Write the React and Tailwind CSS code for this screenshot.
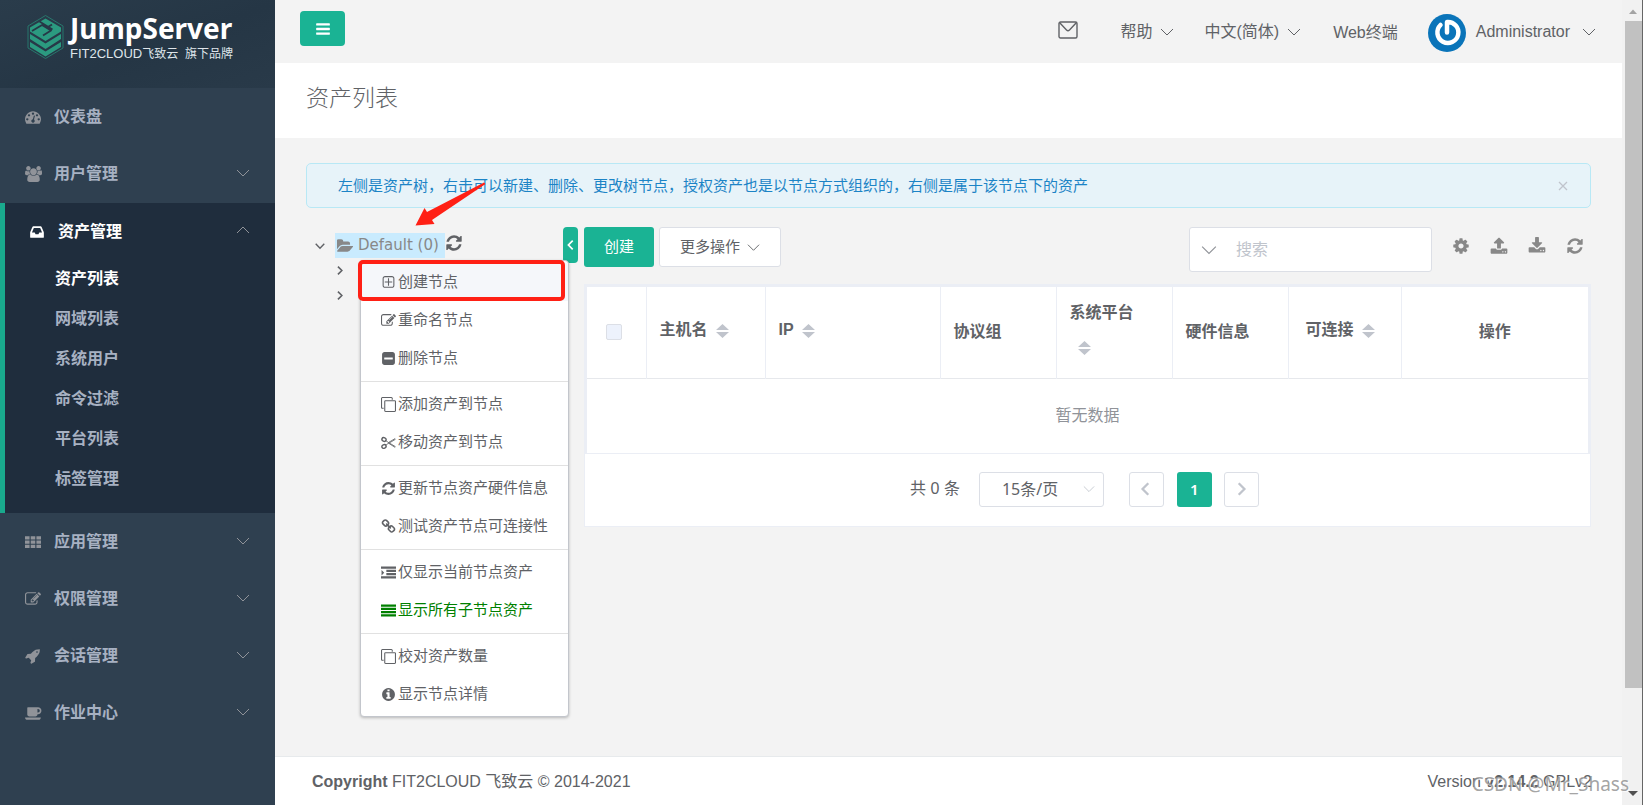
import { useState } from 'react';

// Glyph outlines, one em = 1792 units
const glyphs = {
  bars: { d: 'M1664 1344v128q0 26-19 45t-45 19h-1408q-26 0-45-19t-19-45v-128q0-26 19-45t45-19h1408q26 0 45 19t19 45zm0-512v128q0 26-19 45t-45 19h-1408q-26 0-45-19t-19-45v-128q0-26 19-45t45-19h1408q26 0 45 19t19 45zm0-512v128q0 26-19 45t-45 19h-1408q-26 0-45-19t-19-45v-128q0-26 19-45t45-19h1408q26 0 45 19t19 45z' },
  dashboard: { d: 'M384 1152q0-53-37.5-90.5t-90.5-37.5-90.5 37.5-37.5 90.5 37.5 90.5 90.5 37.5 90.5-37.5 37.5-90.5zm192-448q0-53-37.5-90.5t-90.5-37.5-90.5 37.5-37.5 90.5 37.5 90.5 90.5 37.5 90.5-37.5 37.5-90.5zm428 481l101-382q6-26-7.5-48.5t-38.5-29.5-48 6.5-30 39.5l-101 382q-60 5-107 43.5t-63 98.5q-20 77 20 146t117 89 146-20 89-117q16-60-6-117t-72-91zm660-33q0-53-37.5-90.5t-90.5-37.5-90.5 37.5-37.5 90.5 37.5 90.5 90.5 37.5 90.5-37.5 37.5-90.5zm-640-640q0-53-37.5-90.5t-90.5-37.5-90.5 37.5-37.5 90.5 37.5 90.5 90.5 37.5 90.5-37.5 37.5-90.5zm448 192q0-53-37.5-90.5t-90.5-37.5-90.5 37.5-37.5 90.5 37.5 90.5 90.5 37.5 90.5-37.5 37.5-90.5zm320 448q0 261-141 483-19 29-54 29h-1402q-35 0-54-29-141-221-141-483 0-182 71-348t191-286 286-191 348-71 348 71 286 191 191 286 71 348z' },
  users: { w: 1920, d: 'M593 896q-162 5-265 128h-134q-82 0-138-40.5t-56-118.5q0-353 124-353 6 0 43.5 21t97.5 42.5 119 21.5q67 0 133-23-5 37-5 66 0 159 93 292zm1071 637q0 120-73 189.5t-194 69.5h-874q-121 0-194-69.5t-73-189.5q0-53 3.5-103.5t14-109 26.5-108.5 43-97.5 62-81 85.5-53.5 111.5-20q10 0 43 21.5t73 48 107 48 135 21.5 135-21.5 107-48 73-48 43-21.5q61 0 111.5 20t85.5 53.5 62 81 43 97.5 26.5 108.5 14 109 3.5 103.5zm-1024-1277q0 106-75 181t-181 75-181-75-75-181 75-181 181-75 181 75 75 181zm704 384q0 159-112.5 271.5t-271.5 112.5-271.5-112.5-112.5-271.5 112.5-271.5 271.5-112.5 271.5 112.5 112.5 271.5zm576 225q0 78-56 118.5t-138 40.5h-134q-103-123-265-128 93-133 93-292 0-29-5-66 66 23 133 23 59 0 119-21.5t97.5-42.5 43.5-21q124 0 124 353zm-128-609q0 106-75 181t-181 75-181-75-75-181 75-181 181-75 181 75 75 181z' },
  inbox: { d: 'M1151 960h316q-1-3-2.5-8.5t-2.5-7.5l-212-496h-708l-212 496q-1 3-2.5 8.5t-2.5 7.5h316l95 192h320zm513 30v482q0 26-19 45t-45 19h-1408q-26 0-45-19t-19-45v-482q0-62 25-123l238-552q10-25 36.5-42t52.5-17h832q26 0 52.5 17t36.5 42l238 552q25 61 25 123z' },
  th: { d: 'M0 256h512v352H0zM640 256h512v352H640zM1280 256h512v352H1280zM0 736h512v352H0zM640 736h512v352H640zM1280 736h512v352H1280zM0 1216h512v352H0zM640 1216h512v352H640zM1280 1216h512v352H1280z' },
  edit: { d: 'M888 1184l116-116-152-152-116 116v56h96v96h56zm440-720q-16-16-33 1l-350 350q-17 17-1 33t33-1l350-350q17-17 1-33zm80 594v190q0 119-84.5 203.5t-203.5 84.5h-832q-119 0-203.5-84.5t-84.5-203.5v-832q0-119 84.5-203.5t203.5-84.5h832q63 0 117 25 15 7 18 23 3 17-9 29l-49 49q-14 14-32 8-23-6-45-6h-832q-66 0-113 47t-47 113v832q0 66 47 113t113 47h832q66 0 113-47t47-113v-126q0-13 9-22l64-64q15-15 35-7t20 29zm-96-738l288 288-672 672h-288v-288zm444 132l-92 92-288-288 92-92q28-28 68-28t68 28l152 152q28 28 28 68t-28 68z' },
  rocket: { d: 'M1440 448q0-40-28-68t-68-28-68 28-28 68 28 68 68 28 68-28 28-68zm224-288q0 249-75.5 430.5t-253.5 360.5q-81 80-195 176l-20 379q-2 16-16 26l-384 224q-7 4-16 4-12 0-23-9l-64-64q-13-14-8-32l85-276-281-281-276 85q-3 1-9 1-14 0-23-9l-64-64q-17-19-5-39l224-384q10-14 26-16l379-20q96-114 176-195 188-187 358-258t431-71q14 0 24 9.5t10 22.5z' },
  coffee: { w: 1920, d: 'M1664 640q0-80-56-136t-136-56h-64v384h64q80 0 136-56t56-136zm-1664 768h1792q0 106-75 181t-181 75h-1280q-106 0-181-75t-75-181zm1856-768q0 159-112.5 271.5t-271.5 112.5h-64v32q0 92-66 158t-158 66h-704q-92 0-158-66t-66-158v-736q0-26 19-45t45-19h1152q159 0 271.5 112.5t112.5 271.5z' },
  folderOpen: { w: 1920, d: 'M1815 952q0 31-31 66l-336 396q-43 51-120.5 86.5t-143.5 35.5h-1088q-34 0-60.5-13t-26.5-43q0-31 31-66l336-396q43-51 120.5-86.5t143.5-35.5h1088q34 0 60.5 13t26.5 43zm-343-344v160h-832q-94 0-197 47.5t-164 119.5l-337 396-5 6q0-4-.5-12.5t-.5-12.5v-960q0-92 66-158t158-66h320q92 0 158 66t66 158v32h544q92 0 158 66t66 158z' },
  refresh: { d: 'M1639 1056q0 5-1 7-64 268-268 434.5t-478 166.5q-146 0-282.5-55t-243.5-157l-129 129q-19 19-45 19t-45-19-19-45v-448q0-26 19-45t45-19h448q26 0 45 19t19 45-19 45l-137 137q71 66 161 102t187 36q134 0 250-65t186-179q11-17 53-117 8-23 30-23h192q13 0 22.5 9.5t9.5 22.5zm25-800v448q0 26-19 45t-45 19h-448q-26 0-45-19t-19-45 19-45l138-138q-148-137-349-137-134 0-250 65t-186 179q-11 17-53 117-8 23-30 23h-199q-13 0-22.5-9.5t-9.5-22.5v-7q65-268 270-434.5t480-166.5q146 0 284 55.5t245 156.5l130-129q19-19 45-19t45 19 19 45z' },
  plusSquare: { d: 'M1344 800v64q0 14-9 23t-23 9h-352v352q0 14-9 23t-23 9h-64q-14 0-23-9t-9-23v-352h-352q-14 0-23-9t-9-23v-64q0-14 9-23t23-9h352v-352q0-14 9-23t23-9h64q14 0 23 9t9 23v352h352q14 0 23 9t9 23zm128 448v-832q0-66-47-113t-113-47h-832q-66 0-113 47t-47 113v832q0 66 47 113t113 47h832q66 0 113-47t47-113zm128-832v832q0 119-84.5 203.5t-203.5 84.5h-832q-119 0-203.5-84.5t-84.5-203.5v-832q0-119 84.5-203.5t203.5-84.5h832q119 0 203.5 84.5t84.5 203.5z' },
  minusSquare: { d: 'M1408 960v-128q0-26-19-45t-45-19h-896q-26 0-45 19t-19 45v128q0 26 19 45t45 19h896q26 0 45-19t19-45zm256-544v960q0 119-84.5 203.5t-203.5 84.5h-960q-119 0-203.5-84.5t-84.5-203.5v-960q0-119 84.5-203.5t203.5-84.5h960q119 0 203.5 84.5t84.5 203.5z' },
  clone: { d: 'M1664 1632v-1088q0-13-9.5-22.5t-22.5-9.5h-1088q-13 0-22.5 9.5t-9.5 22.5v1088q0 13 9.5 22.5t22.5 9.5h1088q13 0 22.5-9.5t9.5-22.5zm128-1088v1088q0 66-47 113t-113 47h-1088q-66 0-113-47t-47-113v-1088q0-66 47-113t113-47h1088q66 0 113 47t47 113zm-384-384v160h-128v-160q0-13-9.5-22.5t-22.5-9.5h-1088q-13 0-22.5 9.5t-9.5 22.5v1088q0 13 9.5 22.5t22.5 9.5h160v128h-160q-66 0-113-47t-47-113v-1088q0-66 47-113t113-47h1088q66 0 113 47t47 113z' },
  link: { d: 'M1520 1216q0-40-28-68l-208-208q-28-28-68-28-42 0-72 32 3 3 19 18.5t21.5 21.5 15 19 13 25.5 3.5 27.5q0 40-28 68t-68 28q-15 0-27.5-3.5t-25.5-13-19-15-21.5-21.5-18.5-19q-33 31-33 73 0 40 28 68l206 207q27 27 68 27 40 0 68-26l147-146q28-28 28-67zm-703-705q0-40-28-68l-206-207q-28-28-68-28-39 0-68 27l-147 146q-28 28-28 67 0 40 28 68l208 208q27 27 68 27 42 0 72-31-3-3-19-18.5t-21.5-21.5-15-19-13-25.5-3.5-27.5q0-40 28-68t68-28q15 0 27.5 3.5t25.5 13 19 15 21.5 21.5 18.5 19q33-31 33-73zm895 705q0 120-85 203l-147 146q-83 83-203 83-121 0-204-85l-206-207q-83-83-83-203 0-123 88-209l-88-88q-86 88-208 88-120 0-204-84l-208-208q-84-84-84-204t85-203l147-146q83-83 203-83 121 0 204 85l206 207q83 83 83 203 0 123-88 209l88 88q86-88 208-88 120 0 204 84l208 208q84 84 84 204z' },
  indent: { d: 'M0 192h1792v256H0zM640 576h1152v256H640zM640 960h1152v256H640zM0 1344h1792v256H0zM64 608l320 320-320 320z' },
  justify: { d: 'M0 192h1792v256H0zM0 576h1792v256H0zM0 960h1792v256H0zM0 1344h1792v256H0z' },
  info: { d: 'M1152 1376v-160q0-14-9-23t-23-9h-96v-512q0-14-9-23t-23-9h-320q-14 0-23 9t-9 23v160q0 14 9 23t23 9h96v320h-96q-14 0-23 9t-9 23v160q0 14 9 23t23 9h448q14 0 23-9t9-23zm-128-896v-160q0-14-9-23t-23-9h-192q-14 0-23 9t-9 23v160q0 14 9 23t23 9h192q14 0 23-9t9-23zm640 416q0 209-103 385.5t-279.5 279.5-385.5 103-385.5-103-279.5-279.5-103-385.5 103-385.5 279.5-279.5 385.5-103 385.5 103 279.5 279.5 103 385.5z' },
  cog: { d: 'M1152 896q0-106-75-181t-181-75-181 75-75 181 75 181 181 75 181-75 75-181zm512-109v222q0 12-8 23t-20 13l-185 28q-19 54-39 91 35 50 107 138 10 12 10 25t-9 23q-27 37-99 108t-94 71q-12 0-26-9l-138-108q-44 23-91 38-16 136-29 186-7 28-36 28h-222q-14 0-24.5-8.5t-11.5-21.5l-28-184q-49-16-90-37l-141 107q-10 9-25 9-14 0-25-11-126-114-165-168-7-10-7-23 0-12 8-23 15-21 51-66.5t54-70.5q-27-50-41-99l-183-27q-13-2-21-12.5t-8-23.5v-222q0-12 8-23t19-13l186-28q14-46 39-92-40-57-107-138-10-12-10-24 0-10 9-23 26-36 98.5-107.5t94.5-71.5q13 0 26 10l138 107q44-23 91-38 16-136 29-186 7-28 36-28h222q14 0 24.5 8.5t11.5 21.5l28 184q49 16 90 37l142-107q9-9 24-9 13 0 25 10 129 119 165 170 7 8 7 22 0 12-8 23-15 21-51 66.5t-54 70.5q26 50 41 98l183 28q13 2 21 12.5t8 23.5z' },
  upload: { d: 'M1344 1472q0-26-19-45t-45-19-45 19-19 45 19 45 45 19 45-19 19-45zm256 0q0-26-19-45t-45-19-45 19-19 45 19 45 45 19 45-19 19-45zm128-224v320q0 40-28 68t-68 28h-1472q-40 0-68-28t-28-68v-320q0-40 28-68t68-28h427q21 56 70.5 92t110.5 36h256q61 0 110.5-36t70.5-92h427q40 0 68 28t28 68zm-325-648q-17 40-59 40h-256v448q0 26-19 45t-45 19h-256q-26 0-45-19t-19-45v-448h-256q-42 0-59-40-17-39 14-69l448-448q18-19 45-19t45 19l448 448q31 30 14 69z' },
  download: { d: 'M1344 1344q0-26-19-45t-45-19-45 19-19 45 19 45 45 19 45-19 19-45zm256 0q0-26-19-45t-45-19-45 19-19 45 19 45 45 19 45-19 19-45zm128-224v320q0 40-28 68t-68 28h-1472q-40 0-68-28t-28-68v-320q0-40 28-68t68-28h465l135 136q58 56 136 56t136-56l136-136h464q40 0 68 28t28 68zm-325-569q17 41-14 70l-448 448q-18 19-45 19t-45-19l-448-448q-31-29-14-70 17-39 59-39h256v-448q0-26 19-45t45-19h256q26 0 45 19t19 45v448h256q42 0 59 39z' },
};

function Glyph({ name, size = 16, className = '' }) {
  if (name === 'scissors') {
    return (
      <svg width={size} height={size} viewBox="0 0 16 16" fill="none" stroke="currentColor" className={`shrink-0 ${className}`}>
        <ellipse cx="3.2" cy="4.8" rx="2.3" ry="1.9" strokeWidth="1.5" transform="rotate(25 3.2 4.8)" />
        <ellipse cx="3.2" cy="12.2" rx="2.3" ry="1.9" strokeWidth="1.5" transform="rotate(-25 3.2 12.2)" />
        <path d="M5 6l3 2 7-4.2M5 11l3-2.300 7 4.500M8 8.500h1M8 8l7.500 4.500M8 9l7.500-4.500" strokeWidth="0.9" />
      </svg>
    );
  }
  const { w = 1792, d } = glyphs[name];
  return (
    <svg height={size} width={Math.round((size * w) / 1792)} viewBox={`0 0 ${w} 1792`} fill="currentColor" className={`shrink-0 ${className}`}>
      <path d={d} />
    </svg>
  );
}

const chevronPaths = {
  down: 'M1 4l6 6 6-6',
  up: 'M1 10l6-6 6 6',
  left: 'M9 2L4 7l5 5',
  right: 'M5 2l5 5-5 5',
};

function Chevron({ dir = 'down', size = 14, stroke = 1, className = '' }) {
  return (
    <svg width={size} height={size} viewBox="0 0 14 14" fill="none" stroke="currentColor" strokeWidth={stroke} className={`shrink-0 ${className}`}>
      <path d={chevronPaths[dir]} />
    </svg>
  );
}

const topMenu = [
  { icon: 'dashboard', label: '仪表盘', leaf: true },
  { icon: 'users', label: '用户管理' },
];

const bottomMenu = [
  { icon: 'th', label: '应用管理' },
  { icon: 'edit', label: '权限管理' },
  { icon: 'rocket', label: '会话管理' },
  { icon: 'coffee', label: '作业中心' },
];

const assetMenu = ['资产列表', '网域列表', '系统用户', '命令过滤', '平台列表', '标签管理'];

const contextMenu = [
  [
    { icon: 'plusSquare', label: '创建节点', active: true },
    { icon: 'edit', label: '重命名节点' },
    { icon: 'minusSquare', label: '删除节点' },
  ],
  [
    { icon: 'clone', label: '添加资产到节点' },
    { icon: 'scissors', label: '移动资产到节点' },
  ],
  [
    { icon: 'refresh', label: '更新节点资产硬件信息' },
    { icon: 'link', label: '测试资产节点可连接性' },
  ],
  [
    { icon: 'indent', label: '仅显示当前节点资产' },
    { icon: 'justify', label: '显示所有子节点资产', green: true },
  ],
  [
    { icon: 'clone', label: '校对资产数量' },
    { icon: 'info', label: '显示节点详情' },
  ],
];

const columns = [
  { label: '主机名', width: 'w-[119px]', sort: true },
  { label: 'IP', width: 'w-[175px]', sort: true },
  { label: '协议组', width: 'w-[116px]' },
  { label: '系统平台', width: 'w-[116px]', sort: true },
  { label: '硬件信息', width: 'w-[116px]' },
  { label: '可连接', width: 'w-[113px]', sort: true, pad: 'pl-[17px]' },
  { label: '操作', center: true },
];

function Logo() {
  return (
    <a href="#" className="flex h-[88px] items-start gap-[6px] bg-[linear-gradient(160deg,#2a3c4b,#253645_55%,#293a49)] pt-[12px] pl-[27px]">
      <svg width="37" height="50" viewBox="0 0 37 50" fill="none">
        <path d="M18.500 3.500L36 14v22L18.500 46.500 1 36V14z" stroke="#27776c" strokeWidth="1" />
        {/* top face with the S-shaped cut */}
        <path d="M18.500 6.500L34 15.500v4L18.500 29 3 19.500v-4z" fill="#2b9a80" />
        <path d="M5 19l10-6 9 5.500-8 5M12.500 9.500l13 8M21 15l4-2.500" stroke="#263746" strokeWidth="1.800" strokeLinejoin="round" />
        {/* lower layers */}
        <path d="M3 22l15.500 9.500L34 22v5L18.500 37 3 27z" fill="#2b9a80" />
        <path d="M3 30l15.500 9.500L34 30v5L18.500 44.500 3 35z" fill="#2b9a80" />
      </svg>
      <span className="flex flex-col text-white">
        <span className="font-['Noto_Sans','Open_Sans',sans-serif] text-[28px] leading-[33px] font-bold">JumpServer</span>
        <span className="text-[12px] leading-[18px] whitespace-nowrap text-[#dfe5ea]">
          <span className="text-[13px]">FIT2CLOUD</span>飞致云&nbsp; 旗下品牌
        </span>
      </span>
    </a>
  );
}

function MenuItem({ icon, label, leaf }) {
  return (
    <li>
      <a href="#" className="flex h-[57px] items-center pt-px pr-[25px] pl-[25px] text-[#a7b1c2]">
        <span className="flex w-[29px] text-[#909399]"><Glyph name={icon} /></span>
        <span className="flex-1 font-bold">{label}</span>
        {!leaf && <Chevron className="mb-[3px] text-[#909399]" />}
      </a>
    </li>
  );
}

function Sidebar() {
  return (
    <aside className="w-[275px] shrink-0 bg-[#2f4050]">
      <Logo />
      <ul>
        {topMenu.map((item) => <MenuItem key={item.label} {...item} />)}
        <li className="mt-px border-l-[5px] border-[#19aa8d] bg-[#1f2d3d] pb-[14px]">
          <a href="#" className="flex h-[56px] items-center pt-px pr-[25px] pl-[24px] text-white">
            <span className="flex w-[29px]"><Glyph name="inbox" /></span>
            <span className="flex-1 font-bold">资产管理</span>
            <Chevron dir="up" className="mb-[3px] text-[#909399]" />
          </a>
          <ul>
            {assetMenu.map((label, i) => (
              <li key={label}>
                <a href="#" className={`flex h-10 items-center pl-[50px] font-bold ${i === 0 ? 'text-white' : 'text-[#a7b1c2]'}`}>{label}</a>
              </li>
            ))}
          </ul>
        </li>
        {bottomMenu.map((item) => <MenuItem key={item.label} {...item} />)}
      </ul>
    </aside>
  );
}

function Topbar() {
  return (
    <header className="flex h-[63px] items-center justify-between pr-[26px] pl-[25px]">
      <button aria-label="menu" className="mb-[6px] flex h-[35px] w-[45px] items-center justify-center rounded bg-[#1ab394] text-white">
        <Glyph name="bars" />
      </button>
      <nav className="flex items-center">
        <a href="#" aria-label="mail" className="mr-[42px] mb-[3px]">
          <svg width="20" height="18" viewBox="0 0 20 18" fill="none" stroke="currentColor" strokeWidth="1.400">
            <rect x="1" y="1" width="18" height="16" rx="1.500" />
            <path d="M1.500 1.500l7 7.500q1.500 1.300 3 0l7-7.500" />
          </svg>
        </a>
        <button className="mr-[30px] flex items-center gap-2">帮助<Chevron /></button>
        <button className="mr-[32px] flex items-center gap-2">中文(简体)<Chevron /></button>
        <a href="#" className="mr-[30px] pt-[3px]">Web终端</a>
        <button className="flex items-center">
          <svg width="38" height="38" viewBox="0 0 38 38" fill="none" className="mt-[3px]">
            <circle cx="19" cy="19" r="19" fill="#0a74b9" />
            <path d="M12.500 11A10.500 10.500 0 1 0 19 8v10.500" stroke="#fff" strokeWidth="4.500" strokeLinecap="round" strokeLinejoin="round" />
          </svg>
          <span className="mr-[12px] ml-[10px]">Administrator</span>
          <Chevron />
        </button>
      </nav>
    </header>
  );
}

function ContextMenu() {
  return (
    <div className="absolute top-[33px] left-[54px] z-10 w-[209px] rounded border border-[#c3c6cc] bg-white py-[2px] text-[15px] shadow-[0_1px_3px_rgba(0,0,0,0.25)]">
      <div className="divide-y divide-[#e1e1e1]">
        {contextMenu.map((group, i) => (
          <ul key={i} className={i === 0 ? 'pb-[4px]' : i === contextMenu.length - 1 ? 'pt-[3px] pb-px' : 'pt-[3px] pb-[4px]'}>
            {group.map((item) => (
              <li key={item.label}>
                <button
                  className={`flex h-[38px] w-full items-center pl-[20px] whitespace-nowrap ${item.active ? 'bg-[#f5f7fa]' : ''} ${item.green ? 'text-[#008000]' : 'text-[#606266]'}`}
                >
                  <span className="flex w-[17px] shrink-0"><Glyph name={item.icon} size={15} /></span>
                  {item.label}
                </button>
              </li>
            ))}
          </ul>
        ))}
      </div>
      {/* highlight around the first entry */}
      <div className="pointer-events-none absolute -top-px -left-[3px] h-[41px] w-[207px] rounded-[5px] border-4 border-[#ff2015]" />
    </div>
  );
}

function AssetTree() {
  return (
    <div className="relative w-[278px] shrink-0">
      <div className="flex items-center pt-[6px]">
        <button aria-label="collapse node" className="flex w-[29px] justify-center pr-px"><Chevron size={10} stroke={2} /></button>
        <a href="#" className="flex h-[25px] items-center gap-1 bg-[#c9ebfe] pr-[6px] pl-[2px] font-['DejaVu_Sans',sans-serif] text-[15px] text-[#888]">
          <Glyph name="folderOpen" />
          Default (0)
        </a>
        <button aria-label="refresh tree" className="pb-[6px]"><Glyph name="refresh" size={18} /></button>
      </div>
      <div className="flex w-[67px] flex-col items-center">
        <button aria-label="expand node" className="flex h-[25px] items-center"><Chevron dir="right" size={11} stroke={2} /></button>
        <button aria-label="expand node" className="flex h-[25px] items-center"><Chevron dir="right" size={11} stroke={2} /></button>
      </div>
      <button aria-label="hide tree" className="absolute top-0 right-[6px] flex h-[36px] w-[15px] items-center justify-center rounded bg-[#1ab394] text-white">
        <Chevron dir="left" size={12} stroke={2} />
      </button>
      <ContextMenu />
      <svg width="72" height="46" viewBox="0 0 72 46" className="pointer-events-none absolute -top-[46px] left-[109px] z-20">
        <path d="M0.500 44.500L9.500 27l2.500 4L69 1.500l1.500 1.500L17 39l2.500 4z" fill="#ff2015" />
      </svg>
    </div>
  );
}

function Sorter() {
  return (
    <span className="inline-flex h-[34px] w-[30px] items-center justify-center pb-px align-middle">
      <svg width="13" height="16" viewBox="0 0 13 16" fill="#c0c4cc">
        <path d="M0 7L6.500 1 13 7zM0 9L6.500 15 13 9z" />
      </svg>
    </span>
  );
}

function AssetTable() {
  const [checked, setChecked] = useState(false);
  return (
    <div className="border border-[#ebeef5] bg-white">
      <table className="w-full table-fixed border-collapse border-2 border-b border-[#ebeef5]">
        <thead>
          <tr className="h-[92px] border-b border-[#e6e8ec]">
            <th className="w-[60px] border-r border-[#ebeef5] pr-[4px]">
              <input
                type="checkbox"
                aria-label="select all"
                checked={checked}
                onChange={(e) => setChecked(e.target.checked)}
                className="mx-auto block size-4 appearance-none rounded-xs border border-[#dcdfe6] bg-[#edf2fc] checked:bg-[#1ab394]"
              />
            </th>
            {columns.map((col) => (
              <th
                key={col.label}
                className={`border-r border-[#ebeef5] leading-[34px] font-bold ${col.width || ''} ${col.center ? 'text-center' : `pr-[10px] text-left ${col.pad || 'pl-[13px]'}`} ${col.sort ? 'pb-[3px]' : ''}`}
              >
                {col.label}
                {col.sort && <Sorter />}
              </th>
            ))}
          </tr>
        </thead>
        <tbody>
          <tr>
            <td colSpan={8} className="h-[75px] text-center text-[#909399]">暂无数据</td>
          </tr>
        </tbody>
      </table>
      <div className="flex h-[72px] items-center justify-center pr-[6px] pb-px">
        <span className="mr-[19px]">共 0 条</span>
        <label className="relative mr-[25px] flex items-center">
          <select aria-label="page size" className="h-[35px] w-[125px] appearance-none rounded-[3px] border border-[#dcdfe6] bg-white pl-[22px] font-['Noto_Sans','Noto_Sans_CJK_SC',sans-serif]">
            <option>15条/页</option>
          </select>
          <Chevron size={12} className="pointer-events-none absolute right-[9px] text-[#c0c4cc]" />
        </label>
        <button aria-label="previous page" className="mr-[13px] flex size-[35px] items-center justify-center rounded-[3px] border border-[#dcdfe6] text-[#c0c4cc]">
          <Chevron dir="left" size={16} stroke={2} />
        </button>
        <button className="mr-[12px] size-[35px] rounded-[3px] bg-[#1ab394] font-['Noto_Sans',sans-serif] text-[15px] font-semibold text-white">1</button>
        <button aria-label="next page" className="flex size-[35px] items-center justify-center rounded-[3px] border border-[#dcdfe6] text-[#c0c4cc]">
          <Chevron dir="right" size={16} stroke={2} />
        </button>
      </div>
    </div>
  );
}

function Toolbar() {
  return (
    <div className="mb-[12px] flex items-start">
      <button className="h-10 w-[70px] rounded-[3px] bg-[#1ab394] text-[15px] text-white">创建</button>
      <button className="ml-[5px] flex h-10 w-[122px] items-center justify-center gap-[7px] rounded-[3px] border border-[#dcdfe6] bg-white text-[15px]">
        更多操作<Chevron size={13} />
      </button>
      <label className="ml-auto flex h-[45px] w-[243px] items-center rounded-[3px] border border-[#dcdfe6] bg-white pl-[11px]">
        <Chevron size={16} className="text-[#909399]" />
        <input type="text" placeholder="搜索" aria-label="搜索" className="ml-[19px] min-w-0 flex-1 outline-none placeholder:text-[#c0c4cc]" />
      </label>
      <div className="mr-[7px] ml-[20px] flex h-[38px] items-center gap-[20px] text-[#888]">
        {['cog', 'upload', 'download', 'refresh'].map((name) => (
          <button key={name} aria-label={name}><Glyph name={name} size={18} /></button>
        ))}
      </div>
    </div>
  );
}

function Scrollbar() {
  return (
    <div className="flex w-[21px] shrink-0 flex-col items-center border-r border-[#666] bg-[#f1f1f1] pl-[2px]">
      <svg width="18" height="21" viewBox="0 0 18 21" fill="#a3a3a3"><path d="M5 14l4-4.500 4 4.500z" /></svg>
      <div className="h-[667px] w-[17px] bg-[#c1c1c1]" />
      <svg width="18" height="21" viewBox="0 0 18 21" fill="#505050" className="mt-auto"><path d="M4 7h10l-5 5z" /></svg>
    </div>
  );
}

export default function App() {
  const [notice, setNotice] = useState(true);
  return (
    <div className="relative flex min-h-screen bg-[#f3f3f3] font-['Liberation_Sans','Noto_Sans_CJK_SC',sans-serif] text-[16px] text-[#606266]">
      <Sidebar />
      <div className="flex min-w-0 flex-1 flex-col">
        <Topbar />
        <div className="flex h-[75px] items-center bg-white pb-[6px] pl-[31px]">
          <h1 className="text-[23px] leading-[32px] font-light">资产列表</h1>
        </div>
        <main className="px-[31px] pt-[25px] pb-[40px]">
          {notice && (
            <div className="mb-[19px] flex h-[45px] items-center justify-between rounded-[5px] border border-[#b8e8f5] bg-[#e7f3f9] pt-px pr-[22px] pl-[31px] text-[15px] text-[#1c84c6]">
              <p>左侧是资产树，右击可以新建、删除、更改树节点，授权资产也是以节点方式组织的，右侧是属于该节点下的资产</p>
              <button aria-label="close" onClick={() => setNotice(false)} className="text-[#c0c4cc]">
                <svg width="10" height="10" viewBox="0 0 10 10" stroke="currentColor" strokeWidth="1.300"><path d="M1 1l8 8M9 1l-8 8" /></svg>
              </button>
            </div>
          )}
          <div className="flex">
            <AssetTree />
            <section className="min-w-0 flex-1">
              <Toolbar />
              <AssetTable />
            </section>
          </div>
        </main>
        <footer className="mt-auto flex h-[49px] items-center justify-between border-t border-[#e7eaec] bg-white pt-[2px] pr-[30px] pl-[37px]">
          <p><strong>Copyright</strong> FIT2CLOUD 飞致云 © 2014-2021</p>
          <p>Version <strong>v2.14.2</strong> GPLv2</p>
        </footer>
      </div>
      <Scrollbar />
      <div className="pointer-events-none absolute right-[14px] bottom-[8px] font-['Noto_Sans',sans-serif] text-[19px] leading-[26px] text-[#8c8c8c]/80 [text-shadow:1px_1px_0_rgba(255,255,255,0.8)]">
        CSDN @Mr_Shass
      </div>
    </div>
  );
}
